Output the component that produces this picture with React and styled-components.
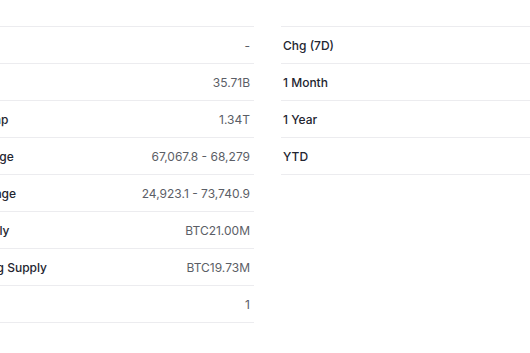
import styled, { createGlobalStyle } from "styled-components";

const GlobalStyle = createGlobalStyle`
  html, body {
    margin: 0;
    padding: 0;
    background: #ffffff;
    overflow: hidden;
  }
  body {
    font-family: Inter, "Liberation Sans", sans-serif;
  }
`;

const leftRows = [
  { label: "Open", value: "-" },
  { label: "Volume", value: "35.71B" },
  { label: "Market Cap", value: "1.34T" },
  { label: "Day's Range", value: "67,067.8 - 68,279" },
  { label: "52 wk Range", value: "24,923.1 - 73,740.9" },
  { label: "Max Supply", value: "BTC21.00M" },
  { label: "Circulating Supply", value: "BTC19.73M" },
  { label: "Rank", value: "1" },
];

const rightRows = [
  { label: "Chg (7D)", value: "" },
  { label: "1 Month", value: "" },
  { label: "1 Year", value: "" },
  { label: "YTD", value: "" },
];

export default function App() {
  return (
    <>
      <GlobalStyle />
      <Stats>
        <Column>
          {leftRows.map((row) => (
            <Row key={row.label}>
              <Label>{row.label}</Label>
              <Value>{row.value}</Value>
            </Row>
          ))}
        </Column>
        <Column>
          {rightRows.map((row) => (
            <Row key={row.label}>
              <Label>{row.label}</Label>
              <Value>{row.value}</Value>
            </Row>
          ))}
        </Column>
      </Stats>
    </>
  );
}

const Stats = styled.section`
  display: grid;
  grid-template-columns: 314px 320px;
  column-gap: 27px;
  align-items: start;
  margin-left: -60px;
  padding-top: 26px;
`;

const Column = styled.dl`
  margin: 0;
  display: flex;
  flex-direction: column;
  border-top: 1px solid #ececef;
`;

const Row = styled.div`
  display: flex;
  justify-content: space-between;
  align-items: center;
  height: 36px;
  padding: 0 4px 0 2px;
  border-bottom: 1px solid #ececef;
`;

const Label = styled.dt`
  font-size: 12px;
  font-weight: 500;
  color: #232530;
`;

const Value = styled.dd`
  margin: 0;
  font-size: 12px;
  color: #5b5e66;
`;
